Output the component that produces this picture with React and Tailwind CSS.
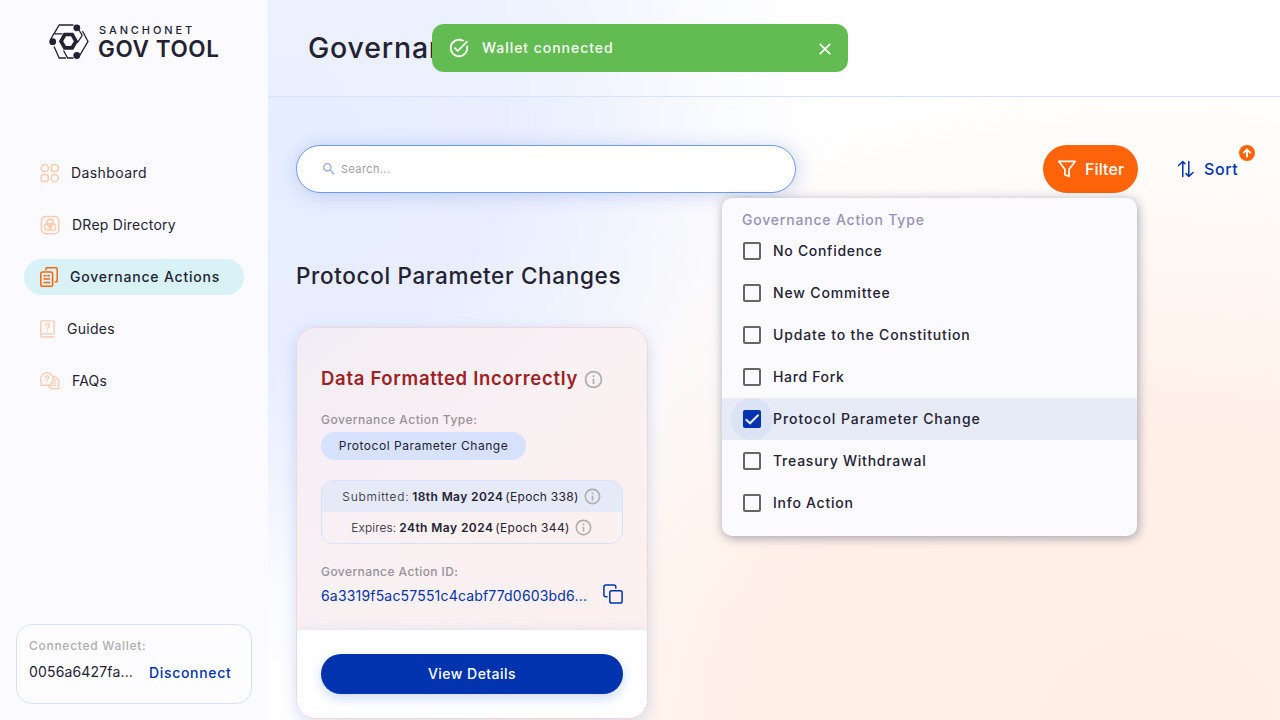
const NAV = [
  { label: 'Dashboard', icon: 'dashboard', text: 'ml-3 tracking-[0.42px]' },
  { label: 'DRep Directory', icon: 'drep', text: 'ml-3 tracking-[0.25px]' },
  { label: 'Governance Actions', icon: 'actions', text: 'ml-3 font-medium tracking-[0.8px]', active: true },
  { label: 'Guides', icon: 'guides', text: 'ml-3 tracking-[0.29px]' },
  { label: 'FAQs', icon: 'faqs', text: 'ml-3 tracking-[0.18px]' },
];

const FILTERS = [
  { label: 'No Confidence', text: 'tracking-[0.7px]' },
  { label: 'New Committee', text: 'tracking-[0.85px]' },
  { label: 'Update to the Constitution', text: 'tracking-[0.85px]' },
  { label: 'Hard Fork', text: 'tracking-[0.65px]' },
  { label: 'Protocol Parameter Change', text: 'tracking-[0.94px]', checked: true },
  { label: 'Treasury Withdrawal', text: 'tracking-[0.76px]' },
  { label: 'Info Action', text: 'tracking-[0.74px]' },
];

function NavIcon({ name }) {
  const common = { fill: 'none', stroke: '#FFCBAD', strokeWidth: 1.5, strokeLinecap: 'round', strokeLinejoin: 'round', className: 'shrink-0' };
  if (name === 'dashboard')
    return (
      <svg {...common} width="19" height="20" viewBox="0 0 19 20">
        <circle cx="4.8" cy="5" r="3.6" />
        <rect x="11.2" y="1.4" width="7" height="7.2" rx="2.8" />
        <rect x="1.2" y="11.4" width="7" height="7.2" rx="2.4" />
        <circle cx="14.7" cy="15" r="3.6" />
      </svg>
    );
  if (name === 'drep')
    return (
      <svg {...common} width="20" height="20" viewBox="0 0 20 20">
        <rect x="1.5" y="1.5" width="17.3" height="17.3" rx="4.2" />
        <circle cx="10.1" cy="7.7" r="3.3" />
        <circle cx="7.8" cy="11.9" r="3.3" />
        <circle cx="12.4" cy="11.9" r="3.3" />
      </svg>
    );
  if (name === 'actions')
    return (
      <svg {...common} stroke="#FF640A" width="18" height="20" viewBox="0 0 18 20">
        <path d="M5.8 2.7V2.2a1.4 1.4 0 0 1 1.4-1.4h8.4a1.6 1.6 0 0 1 1.6 1.4v11.2a1.5 1.5 0 0 1-1.5 1.5h-.5" />
        <rect x=".8" y="4.9" width="11.8" height="14.300" rx="1.8" />
        <path d="M4 8.700h2M7.800 8.700h1.600M4 12h5.600M4 15.400h5.600" />
      </svg>
    );
  if (name === 'guides')
    return (
      <svg {...common} strokeWidth="1.300" width="15" height="18" viewBox="0 0 15 18">
        <path d="M.8 15.3V2.4A1.5 1.5 0 0 1 2.3.9h10.5a1.3 1.3 0 0 1 1.3 1.3v11.6H2.3a1.6 1.6 0 0 0 0 3.2h11.8" />
        <path d="M5.7 5.5c0-2.4 3.8-2.4 3.8 0 0 1.5-1.9 1.3-1.9 3.1M7.6 10.7v.2" />
      </svg>
    );
  return (
    <svg {...common} strokeWidth="1.300" width="20" height="18" viewBox="0 0 20 18">
      <path d="M1 13.400l.4-3.200A6.300 6.300 0 1 1 4.900 13z" />
      <path d="M13 4.700a5.900 5.900 0 0 1 5.400 8.800l.6 3.400-3.400-.5a6 6 0 0 1-7.300-2.600" />
      <path d="M5.200 5.500c0-2.300 3.500-2.300 3.500 0 0 1.300-1.700 1.200-1.700 2.700M7 10v.1M13.500 8.200h2M12.500 10.800h3.700M10.500 13.300h5.200" />
    </svg>
  );
}

function InfoIcon({ className }) {
  return (
    <svg className={className} viewBox="0 0 24 24" fill="#ADAEAD">
      <path d="M11 7h2v2h-2zm0 4h2v6h-2zm1-9C6.480 2 2 6.480 2 12s4.480 10 10 10 10-4.480 10-10S17.520 2 12 2zm0 18c-4.410 0-8-3.590-8-8s3.590-8 8-8 8 3.590 8 8-3.590 8-8 8z" />
    </svg>
  );
}

function Logo() {
  return (
    <div className="ml-[49px] mt-6 flex h-9">
      <svg width="40" height="36" viewBox="0 0 40 36" fill="none" stroke="#242232" strokeWidth="1.300">
        <path d="M24.500 1H10.200L5 9.800M30 6l3.200 5.400M1.800 15.200L4.700 9.900H13.500M5 22.500L10.200 34H17M33.500 7.300L39 17.400 29.800 33M24.500 34H18.700L14.500 26.500M33.300 11.300L28.200 19" />
        <path fill="#242232" stroke="none" fillRule="evenodd" d="M14.700 8.700h9.600l4.800 8.500-4.800 8.500h-9.600l-4.800-8.500zM17 12.300l-2.800 4.900 2.800 4.900h5l2.800-4.900L22 12.300z" />
        <g fill="#242232" stroke="none">
          <circle cx="27.800" cy="3.800" r="3.400" />
          <circle cx="3.700" cy="17.700" r="3.400" />
          <circle cx="27.800" cy="31.500" r="3.400" />
        </g>
      </svg>
      <div className="ml-[9px] flex flex-col whitespace-nowrap text-[#242232]">
        <span className="ml-px mt-px h-[11px] text-[11px] font-medium leading-[11px] tracking-[2.900px]">SANCHONET</span>
        <span className="mt-[3px] text-[22.500px] font-semibold leading-[20px] tracking-[0.600px]">GOV TOOL</span>
      </div>
    </div>
  );
}

function Sidebar() {
  return (
    <aside className="flex w-[268px] shrink-0 flex-col bg-[#FBFBFF]">
      <Logo />
      <nav className="mt-[95px] flex flex-col gap-4 px-6">
        {NAV.map((n) => (
          <a key={n.label} className={`flex h-9 items-center rounded-full pl-4 text-sm text-[#242232] ${n.active ? 'bg-[#D8F2F7]' : ''}`}>
            <NavIcon name={n.icon} />
            <span className={`whitespace-nowrap ${n.text}`}>{n.label}</span>
          </a>
        ))}
      </nav>
      <div className="mx-4 mb-4 mt-auto h-20 rounded-2xl border border-[#D6E2FF] bg-[#FDFDFF] px-3 pt-3">
        <div className="text-xs font-medium leading-[18px] tracking-[0.720px] text-[#ADAEAD]">Connected Wallet:</div>
        <div className="mt-1.5 flex items-center whitespace-nowrap text-sm leading-5">
          <span className="w-[120px] tracking-[0.160px] text-[#242232]">0056a6427fa...</span>
          <span className="mt-0.5 font-medium tracking-[0.680px] text-[#0033AD]">Disconnect</span>
        </div>
      </div>
    </aside>
  );
}

function Toast() {
  return (
    <div className="absolute left-[432px] top-6 z-20 flex h-12 w-[416px] items-center rounded-xl bg-[#62BC52] pl-4 pr-[15px] text-white">
      <svg width="22" height="22" viewBox="0 0 24 24" fill="currentColor">
        <path d="M22 5.180L10.590 16.600l-4.240-4.240 1.410-1.410 2.830 2.830 10-10L22 5.180zm-2.210 5.040c.13.570.21 1.170.21 1.780 0 4.420-3.580 8-8 8s-8-3.580-8-8 3.580-8 8-8c1.580 0 3.040.46 4.280 1.250l1.440-1.440C16.100 2.670 14.130 2 12 2 6.480 2 2 6.480 2 12s4.480 10 10 10 10-4.480 10-10c0-1.190-.22-2.330-.6-3.390l-1.610 1.610z" />
      </svg>
      <span className="ml-3 text-sm font-medium tracking-[0.960px]">Wallet connected</span>
      <svg className="ml-auto mt-0.5" width="16" height="16" viewBox="0 0 16 16" fill="none" stroke="currentColor" strokeWidth="1.700">
        <path d="M2.800 2.800l10.400 10.400M13.200 2.800L2.800 13.200" />
      </svg>
    </div>
  );
}

function FilterMenu() {
  return (
    <div className="absolute right-px top-[53px] z-10 h-[338px] w-[415px] rounded-[10px] bg-[#FBFBFF] pt-3 shadow-[1px_2px_11px_0px_rgba(0,18,61,0.37)]">
      <div className="h-5 pl-5 text-sm font-medium leading-5 tracking-[0.800px] text-[#9792B5]">Governance Action Type</div>
      {FILTERS.map((f) => (
        <label key={f.label} className={`flex h-[42px] items-center pl-[9px] text-sm font-medium text-[#242232] ${f.checked ? 'bg-[#E6EBF7]' : ''}`}>
          <span className={`flex size-[42px] items-center justify-center rounded-full ${f.checked ? 'bg-[#DCE3F4]' : ''}`}>
            {f.checked ? (
              <span className="flex size-[18px] items-center justify-center rounded-[2px] bg-[#0033AD]">
                <svg width="18" height="18" viewBox="0 0 18 18" fill="none" stroke="#E6EBF7" strokeWidth="2">
                  <path d="M2.700 9.300L7 13.300 15.600 4.700" />
                </svg>
              </span>
            ) : (
              <span className="size-[18px] rounded-[2px] border-2 border-[#666666]" />
            )}
          </span>
          <span className={`whitespace-nowrap ${f.text}`}>{f.label}</span>
        </label>
      ))}
    </div>
  );
}

function Toolbar() {
  return (
    <div className="flex h-12 items-center">
      <div className="flex h-12 w-[500px] items-center rounded-full border border-[#6E9BF5] bg-white pl-6 shadow-[2px_2px_20px_0px_rgba(0,51,173,0.18)]">
        <svg width="16" height="16" viewBox="0 0 24 24" fill="#99ADDE">
          <path d="M15.500 14h-.79l-.28-.27C15.410 12.590 16 11.110 16 9.500 16 5.910 13.090 3 9.500 3S3 5.910 3 9.500 5.910 16 9.500 16c1.610 0 3.090-.59 4.230-1.570l.27.28v.79l5 4.990L20.490 19l-4.990-5zm-6 0C7.010 14 5 11.990 5 9.500S7.010 5 9.500 5 14 7.010 14 9.500 11.990 14 9.500 14z" />
        </svg>
        <span className="ml-1 text-[11px] leading-4 tracking-[0.380px] text-[#A0A0A3]">Search...</span>
      </div>
      <div className="relative ml-auto">
        <button className="flex h-12 w-[95px] items-center rounded-full bg-[#FF640A] pl-[14px] text-base font-medium text-white">
          <svg width="20" height="20" viewBox="0 0 20 20" fill="none" stroke="currentColor" strokeWidth="1.700" strokeLinejoin="round">
            <path d="M1.700 2.300h16.600l-6.200 8v7.200l-4.200-1.800v-5.400z" />
          </svg>
          <span className="ml-2 tracking-[0.100px]">Filter</span>
        </button>
        <FilterMenu />
      </div>
      <div className="relative ml-[38px] mr-[25px] flex h-12 w-[79px] items-center text-base font-medium text-[#0033AD]">
        <svg width="20" height="20" viewBox="0 0 20 20" fill="none" stroke="currentColor" strokeWidth="1.500" strokeLinecap="round" strokeLinejoin="round">
          <path d="M6.800 17.500V2.500M2.600 6.500l4.200-4 2.200 2.200M12.800 2.500v15M17 13.500l-4.200 4-2.900-2.900" />
        </svg>
        <span className="ml-2 tracking-[0.600px]">Sort</span>
        <span className="absolute right-0 top-0 flex size-4 items-center justify-center rounded-full bg-[#FF640A]">
          <svg width="10" height="10" viewBox="0 0 10 10" fill="none" stroke="white" strokeWidth="1.900">
            <path d="M5 9.200V1.800M1.300 5.200L5 1.500l3.700 3.700" />
          </svg>
        </span>
      </div>
    </div>
  );
}

function DateRow({ label, labelClass, date, dateClass, epoch, epochClass, className }) {
  return (
    <div className={`flex items-center justify-center whitespace-nowrap text-xs text-[#242232] ${className}`}>
      <span className={`font-light ${labelClass}`}>{label}</span>
      <span className={`ml-[3px] font-semibold ${dateClass}`}>{date}</span>
      <span className={`ml-[2px] ${epochClass}`}>{epoch}</span>
      <InfoIcon className="ml-1 size-[19px]" />
    </div>
  );
}

function ActionCard() {
  return (
    <article className="flex h-[392px] w-[352px] flex-col overflow-hidden rounded-[20px] border border-[#F6D5D8] shadow-[0px_4px_15px_0px_rgba(47,98,220,0.2)]">
      <div className="flex h-[302px] flex-col bg-linear-to-br from-[#F2EDF5] via-[#FAF1F3] via-55% to-[#FDF0EF] px-6">
        <div className="mt-[38px] flex h-[26px] items-center">
          <h3 className="whitespace-nowrap text-[18.500px] font-semibold tracking-[0.700px] text-[#9C2224]">Data Formatted Incorrectly</h3>
          <InfoIcon className="ml-[5px] size-[21px]" />
        </div>
        <div className="mt-[19px] h-[18px] text-xs font-medium leading-[18px] tracking-[0.490px] text-[#969299]">Governance Action Type:</div>
        <div className="mt-[3px] flex h-7 w-[205px] shrink-0 items-center justify-center whitespace-nowrap rounded-full bg-[#D6E2FF] text-xs tracking-[0.520px] text-[#242232]">Protocol Parameter Change</div>
        <div className="mt-5 flex h-16 shrink-0 flex-col overflow-hidden rounded-xl border border-[#D6E2FF]">
          <DateRow className="h-[31px] bg-[#E6E9F8]" label="Submitted:" labelClass="tracking-[0.750px]" date="18th May 2024" dateClass="tracking-[0.390px]" epoch="(Epoch 338)" epochClass="tracking-[0.300px]" />
          <DateRow className="h-[31px]" label="Expires:" labelClass="tracking-[0.100px]" date="24th May 2024" dateClass="tracking-[0.430px]" epoch="(Epoch 344)" epochClass="tracking-[0.330px]" />
        </div>
        <div className="mt-[19px] h-[18px] text-xs font-medium leading-[18px] tracking-[0.420px] text-[#969299]">Governance Action ID:</div>
        <div className="mt-[3px] flex h-5 items-center justify-between whitespace-nowrap text-sm tracking-[0.180px] text-[#0033AD]">
          <span className="mt-1">6a3319f5ac57551c4cabf77d0603bd6...</span>
          <svg className="-mt-px" width="20" height="20" viewBox="0 0 20 20" fill="none" stroke="currentColor" strokeWidth="1.500" strokeLinecap="round" strokeLinejoin="round">
            <rect x="6.800" y="6.800" width="12.300" height="12.300" rx="1.800" />
            <path d="M4 12.800H2.800A1.900 1.900 0 0 1 .9 10.900V2.800A1.900 1.900 0 0 1 2.800.9h8.100a1.900 1.900 0 0 1 1.900 1.900V3.900" />
          </svg>
        </div>
      </div>
      <div className="flex-1 bg-white px-6 pt-6 shadow-[0px_4px_15px_0px_rgba(47,98,220,0.2)]">
        <button className="h-10 w-full rounded-full bg-[#0033AD] text-sm font-medium tracking-[0.460px] text-white shadow-[0px_4px_12px_0px_rgba(47,98,220,0.25)]">View Details</button>
      </div>
    </article>
  );
}

export default function App() {
  return (
    <div className="relative flex h-[720px] w-[1280px] overflow-hidden bg-white font-['Inter','Liberation_Sans',sans-serif]">
      <Sidebar />
      <main className="flex flex-1 flex-col bg-[radial-gradient(ellipse_560px_600px_at_2%_18%,#E5EDFF_0%,#E8EEFF_38%,rgba(236,241,255,0.8)_58%,rgba(246,248,255,0.45)_78%,rgba(255,255,255,0)_100%),radial-gradient(ellipse_900px_650px_at_88%_100%,#FFEEE5_0%,#FFF0E8_45%,#FFF9F5_75%,#FFFFFF_100%)]">
        <header className="flex h-[97px] items-center border-b border-[#D6E2FF] bg-white/20 pl-10">
          <h1 className="whitespace-nowrap text-[28.500px] font-medium leading-9 tracking-[0.800px] text-[#242232]">Governance Actions</h1>
        </header>
        <div className="pl-7 pt-12">
          <Toolbar />
          <h2 className="mb-[35px] mt-[66px] h-[33px] whitespace-nowrap text-[22.500px] font-medium leading-[33px] tracking-[0.650px] text-[#242232]">Protocol Parameter Changes</h2>
          <ActionCard />
        </div>
      </main>
      <Toast />
    </div>
  );
}
